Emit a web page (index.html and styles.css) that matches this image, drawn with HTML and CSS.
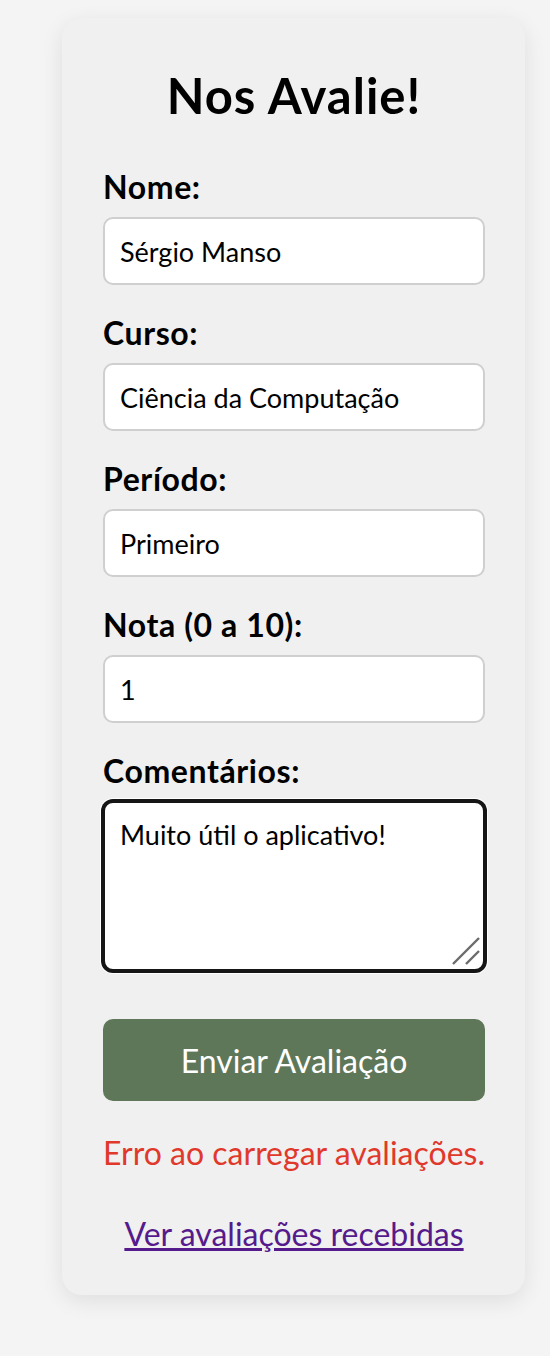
FILE: index.html
```html
<!DOCTYPE html>
<html lang="pt-BR">
<head>
<meta charset="utf-8">
<title>Nos Avalie!</title>
<link rel="stylesheet" href="styles.css">
</head>
<body>
<main class="card">
  <h1 class="title">Nos Avalie!</h1>
  <form class="form">
    <div class="field">
      <label class="label" for="nome">Nome:</label>
      <input class="input" id="nome" type="text" value="Sérgio Manso">
    </div>
    <div class="field">
      <label class="label" for="curso">Curso:</label>
      <input class="input" id="curso" type="text" value="Ciência da Computação">
    </div>
    <div class="field">
      <label class="label" for="periodo">Período:</label>
      <input class="input" id="periodo" type="text" value="Primeiro">
    </div>
    <div class="field">
      <label class="label" for="nota">Nota (0 a 10):</label>
      <input class="input" id="nota" type="text" value="1">
    </div>
    <div class="field field-last">
      <label class="label" for="comentarios">Comentários:</label>
      <div class="textarea-wrap">
        <textarea class="input textarea is-focused" id="comentarios">Muito útil o aplicativo!</textarea>
        <svg class="grip" width="30" height="30" viewBox="0 0 30 30" aria-hidden="true">
          <line x1="2" y1="28" x2="28" y2="2" stroke="#6b6b6b" stroke-width="2.4"/>
          <line x1="15" y1="28" x2="28" y2="15" stroke="#6b6b6b" stroke-width="2.4"/>
        </svg>
      </div>
    </div>
    <button class="submit" type="button">Enviar Avaliação</button>
  </form>
  <p class="error">Erro ao carregar avaliações.</p>
  <p class="more"><a class="link" href="#avaliacoes">Ver avaliações recebidas</a></p>
</main>
</body>
</html>
```
FILE: styles.css
```css
html, body {
  margin: 0;
  padding: 0;
  background: #f4f4f4;
}
body {
  font-family: Lato, "Noto Sans", sans-serif;
  color: #000;
  padding: 18px 0 63px 62px;
}
.card {
  box-sizing: border-box;
  width: 463px;
  background: #f0f0f0;
  border-radius: 20px;
  box-shadow: 0 6px 22px rgba(0, 0, 0, 0.09);
  padding: 49px 40px 41px 41px;
}
.title {
  margin: 0;
  text-align: center;
  font-size: 49px;
  line-height: 56px;
  letter-spacing: 1px;
  font-weight: 700;
}
.form {
  display: flex;
  flex-direction: column;
  margin-top: 46px;
}
.field {
  display: flex;
  flex-direction: column;
  margin-bottom: 30px;
}
.field-last {
  margin-bottom: 48px;
}
.label {
  font-size: 32px;
  line-height: 36px;
  letter-spacing: 0.6px;
  font-weight: 700;
  margin-bottom: 12px;
}
.input {
  box-sizing: border-box;
  width: 100%;
  height: 68px;
  margin: 0;
  padding: 0 15px;
  border: 2px solid #cfcfcf;
  border-radius: 10px;
  background: #fff;
  font-family: inherit;
  font-size: 27px;
  color: #000;
  outline: none;
}
.textarea-wrap {
  position: relative;
  display: flex;
}
.textarea {
  height: 170px;
  padding: 15px;
  line-height: 34px;
  resize: none;
}
.is-focused {
  border-color: #161616;
  box-shadow: 0 0 0 2px #161616, 0 0 0 3px #fff;
}
.grip {
  position: absolute;
  right: 4px;
  bottom: 5px;
}
.submit {
  height: 82px;
  border: none;
  border-radius: 10px;
  background: #5f7759;
  color: #fff;
  font-family: inherit;
  font-size: 32px;
  cursor: pointer;
}
.error {
  margin: 32px 0 0;
  text-align: center;
  color: #e0392b;
  font-size: 32px;
  line-height: 40px;
}
.more {
  margin: 41px 0 0;
  text-align: center;
  font-size: 32px;
  line-height: 40px;
}
.link {
  color: #551a8b;
}
```
